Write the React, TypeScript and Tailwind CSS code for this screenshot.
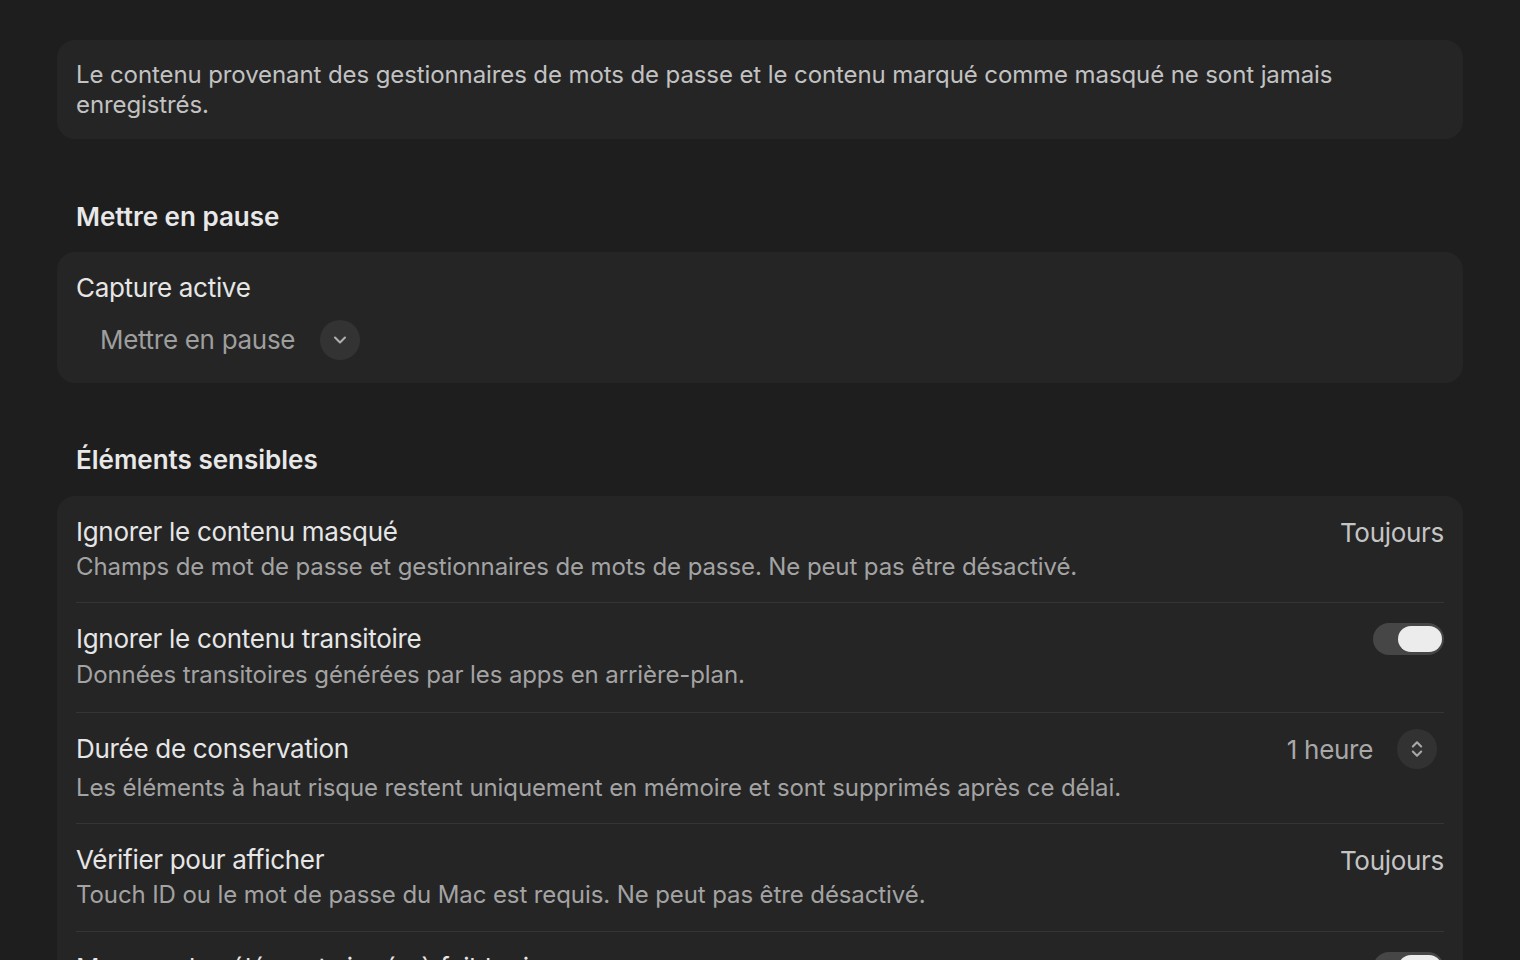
import { ChevronDown, ChevronsUpDown } from "lucide-react"

const font = { fontFamily: "Inter, 'Noto Sans', 'Liberation Sans', sans-serif" }

function Toggle() {
  return (
    <div className="w-[71px] h-[32px] rounded-full bg-[#464646] flex items-center justify-end pr-[2px]">
      <div className="w-[44px] h-[26px] rounded-full bg-[#ececec]" />
    </div>
  )
}

function Row({
  title,
  desc,
  right,
  last,
  pad,
  descGap,
}: {
  title: string
  desc: string
  right?: React.ReactNode
  last?: boolean
  pad: string
  descGap: string
}) {
  return (
    <div className={`flex justify-between pt-[18px] ${pad} ${last ? "" : "border-b border-[#353535]"}`}>
      <div>
        <div className="text-[26px] leading-[36px] text-[#e6e6e6] tracking-[-0.3px]">{title}</div>
        <div className={`${descGap} text-[24px] leading-[34px] text-[#a3a3a3] tracking-[-0.1px]`}>{desc}</div>
      </div>
      <div className="h-[36px] flex items-center">{right}</div>
    </div>
  )
}

export default function App() {
  const rows = [
    {
      title: "Ignorer le contenu masqué",
      desc: "Champs de mot de passe et gestionnaires de mots de passe. Ne peut pas être désactivé.",
      right: <span className="text-[26px] text-[#c4c4c4] tracking-[-0.3px]">Toujours</span>,
      pad: "pb-[18px]",
      descGap: "mt-0",
    },
    {
      title: "Ignorer le contenu transitoire",
      desc: "Données transitoires générées par les apps en arrière-plan.",
      right: <Toggle />,
      pad: "pb-[20px]",
      descGap: "mt-[1px]",
    },
    {
      title: "Durée de conservation",
      desc: "Les éléments à haut risque restent uniquement en mémoire et sont supprimés après ce délai.",
      right: (
        <div className="flex items-center gap-[24px] pr-[7px]">
          <span className="text-[26px] text-[#a8a8a8] tracking-[-0.3px]">1 heure</span>
          <div className="w-[40px] h-[40px] rounded-full bg-[#323232] flex items-center justify-center">
            <ChevronsUpDown className="w-[20px] h-[20px] text-[#a8a8a8]" strokeWidth={2.5} />
          </div>
        </div>
      ),
      pad: "pb-[18px]",
      descGap: "mt-[4px]",
    },
    {
      title: "Vérifier pour afficher",
      desc: "Touch ID ou le mot de passe du Mac est requis. Ne peut pas être désactivé.",
      right: <span className="text-[26px] text-[#c4c4c4] tracking-[-0.3px]">Toujours</span>,
      pad: "pb-[19px]",
      descGap: "mt-0",
    },
    {
      title: "Masquer les éléments jugés à faible risque",
      desc: "Les éléments à faible risque sont masqués jusqu'à leur vérification.",
      right: <Toggle />,
      pad: "pb-[18px]",
      descGap: "mt-0",
    },
  ]

  return (
    <div className="min-h-screen bg-[#1e1e1e] px-[57px] pt-[40px] pb-[40px]" style={font}>
      <div className="rounded-[18px] bg-[#252525] px-[19px] pt-[20px] pb-[19px]">
        <p className="max-w-[1300px] text-[24px] leading-[30px] text-[#c2c2c2] tracking-[-0.1px]">
          Le contenu provenant des gestionnaires de mots de passe et le contenu marqué comme masqué ne sont jamais
          enregistrés.
        </p>
      </div>

      <h2 className="mt-[60px] px-[19px] text-[26px] leading-[36px] font-semibold text-[#e8e8e8]">
        Mettre en pause
      </h2>

      <div className="mt-[17px] rounded-[18px] bg-[#252525] px-[19px] pt-[18px] pb-[23px]">
        <div className="text-[26px] leading-[36px] text-[#e6e6e6] tracking-[-0.3px]">Capture active</div>
        <div className="mt-[14px] flex items-center gap-[25px] pl-[24px]">
          <span className="text-[26px] leading-[40px] text-[#9e9e9e] tracking-[-0.3px]">Mettre en pause</span>
          <div className="w-[40px] h-[40px] rounded-full bg-[#333333] flex items-center justify-center">
            <ChevronDown className="w-[20px] h-[20px] text-[#b0b0b0]" strokeWidth={2.5} />
          </div>
        </div>
      </div>

      <h2 className="mt-[59px] px-[19px] text-[26px] leading-[36px] font-semibold text-[#e8e8e8]">
        Éléments sensibles
      </h2>

      <div className="mt-[18px] rounded-[18px] bg-[#252525] px-[19px]">
        {rows.map((r, i) => (
          <Row
            key={i}
            title={r.title}
            desc={r.desc}
            right={r.right}
            pad={r.pad}
            descGap={r.descGap}
            last={i === rows.length - 1}
          />
        ))}
      </div>
    </div>
  )
}
